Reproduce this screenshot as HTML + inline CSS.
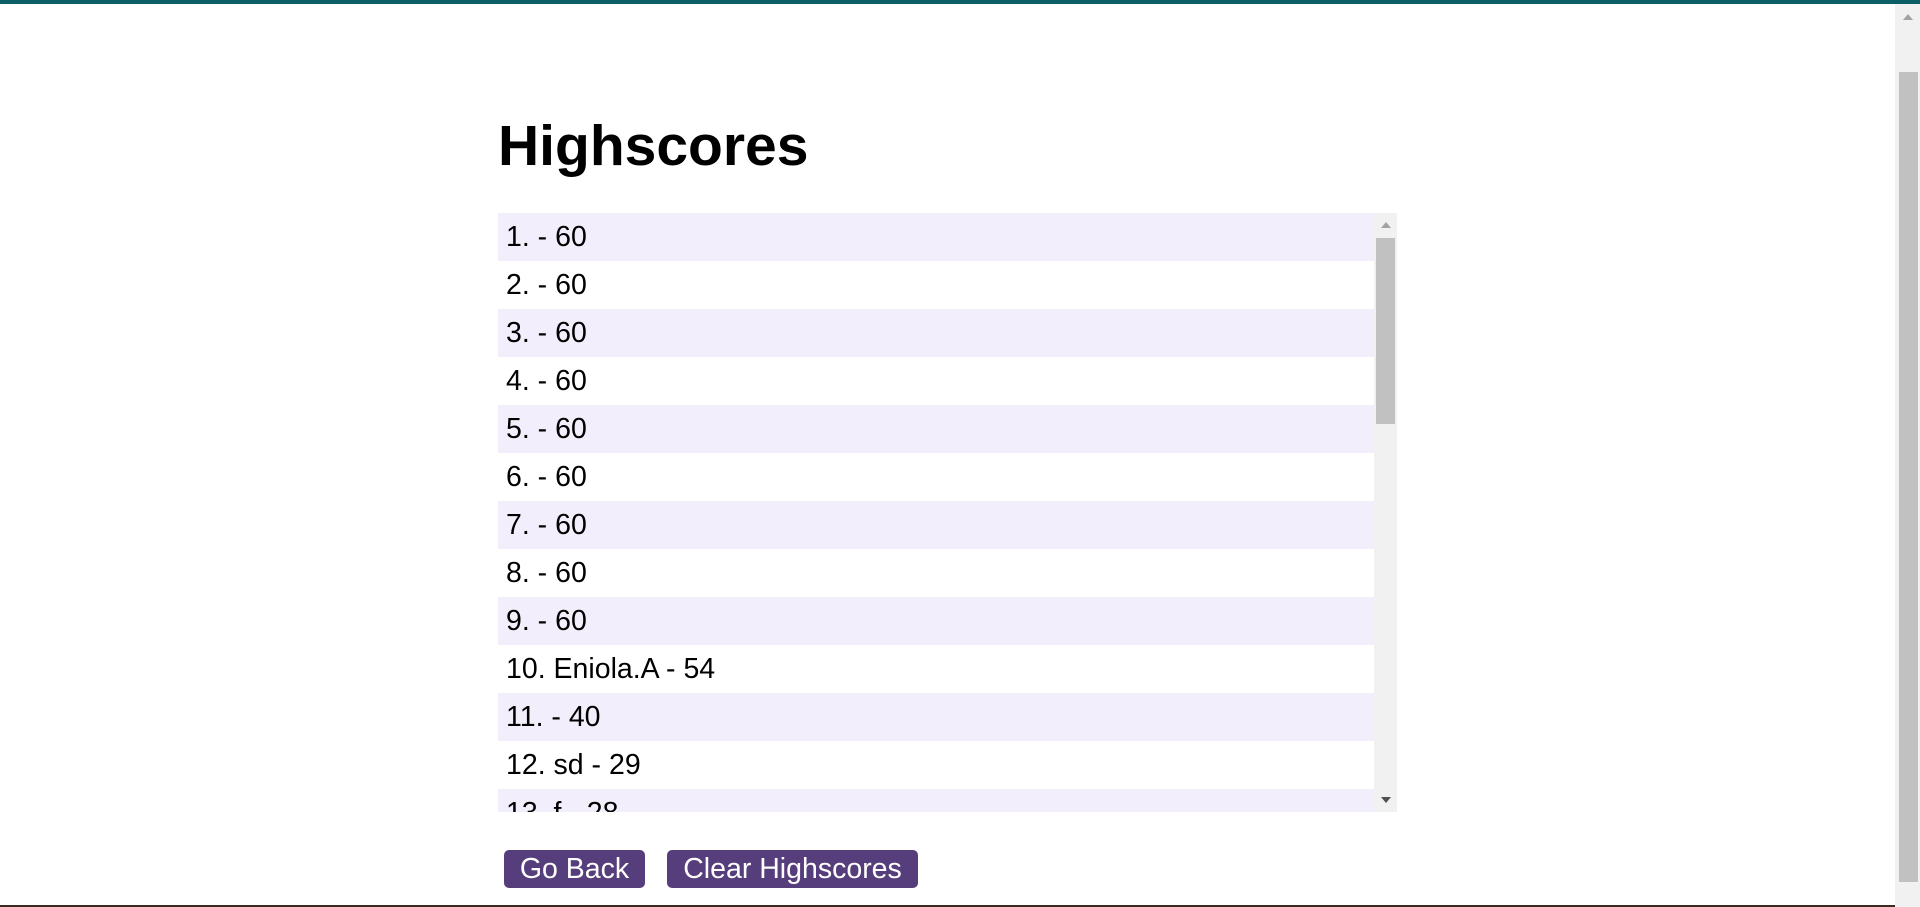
<!DOCTYPE html>
<html><head><style>
html,body{margin:0;padding:0;width:1920px;height:907px;overflow:hidden;background:#fff;font-family:"Liberation Sans",Arial,sans-serif;}
.top{position:absolute;left:0;top:0;width:1920px;height:4px;background:#0d5f66;}
.bot{position:absolute;left:0;bottom:0;width:1895px;height:2px;background:#3a2a22;}
h1{position:absolute;left:498px;top:111px;margin:0;font-size:57px;font-weight:bold;line-height:70px;color:#000;}
.list{position:absolute;left:498px;top:213px;width:899px;height:599px;overflow:hidden;}
.rows{position:absolute;left:0;top:0;width:876px;}
.row{height:48px;line-height:48px;font-size:28.5px;padding-left:8px;color:#000;}
.row:nth-child(odd){background:#f3eefb;}
.sb{position:absolute;right:0;top:0;width:23px;height:599px;background:#f1f1f1;}
.sb .th{position:absolute;left:2px;top:25px;width:19px;height:186px;background:#c1c1c1;}
.up,.dn{position:absolute;left:7px;width:0;height:0;border-left:5px solid transparent;border-right:5px solid transparent;}
.up{top:9px;border-bottom:6px solid #a3a3a3;}
.dn{bottom:9px;border-top:6px solid #505050;}
.psb{position:absolute;right:0;top:4px;width:25px;height:903px;background:#f1f1f1;}
.psb .th{position:absolute;left:4px;top:68px;width:19px;height:810px;background:#c1c1c1;}
.psb .up{left:8px;top:10px;border-bottom-color:#a3a3a3;}
.btn{position:absolute;top:850px;height:38px;line-height:38px;background:#563d7c;color:#fff;font-size:28.5px;border-radius:5px;text-align:center;}
</style></head><body>
<div class="top"></div>
<h1>Highscores</h1>
<div class="list"><div class="rows">
<div class="row">1. - 60</div><div class="row">2. - 60</div><div class="row">3. - 60</div><div class="row">4. - 60</div><div class="row">5. - 60</div><div class="row">6. - 60</div><div class="row">7. - 60</div><div class="row">8. - 60</div><div class="row">9. - 60</div><div class="row">10. Eniola.A - 54</div><div class="row">11. - 40</div><div class="row">12. sd - 29</div><div class="row">13. f - 28</div>
</div><div class="sb"><div class="up"></div><div class="th"></div><div class="dn"></div></div></div>
<div class="btn" style="left:504px;width:141px;">Go Back</div>
<div class="btn" style="left:667px;width:251px;">Clear Highscores</div>
<div class="psb"><div class="up"></div><div class="th"></div></div>
<div class="bot"></div>
</body></html>
